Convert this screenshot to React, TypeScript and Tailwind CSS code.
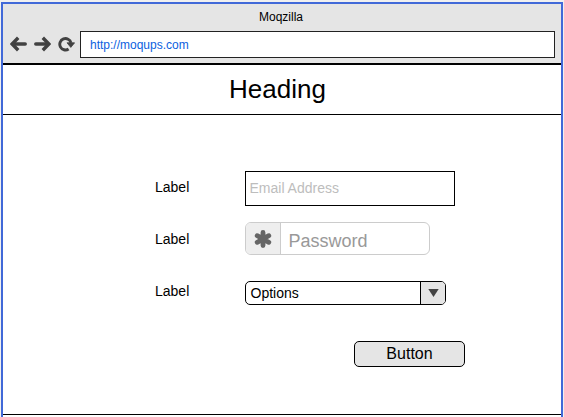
import type { ReactNode } from 'react';

const ARIAL = "font-['Liberation_Sans',Arial,sans-serif]";

function ArrowLeft({ className = '' }: { className?: string }) {
  return (
    <svg width="17" height="16" viewBox="0 0 17 16" className={className} fill="none" stroke="#424242">
      <path d="M3 8H15.2" strokeWidth="3.5" strokeLinecap="round" />
      <path d="M8.2 1.8L2.2 8L8.2 14.2" strokeWidth="3.4" />
    </svg>
  );
}

function Reload() {
  return (
    <svg width="17" height="16" viewBox="0 0 17 16" fill="none">
      <path d="M10.6 13A5.7 5.7 0 1 1 13 6.8" stroke="#424242" strokeWidth="2.9" />
      <path d="M9 6.8H16.6L12.8 11.4Z" fill="#424242" stroke="#424242" strokeWidth="0.8" strokeLinejoin="round" />
    </svg>
  );
}

function Asterisk() {
  return (
    <svg width="18" height="18" viewBox="0 0 18 18" stroke="#666" strokeWidth="4.8" strokeLinecap="round">
      <path d="M9 2.4V15.6M3.2 5.7L14.8 12.3M14.8 5.7L3.2 12.3" />
    </svg>
  );
}

function Row({ className, labelClassName, children }: { className: string; labelClassName: string; children: ReactNode }) {
  return (
    <div className={`flex items-center ${className}`}>
      <span className={`w-[90px] text-[14px] leading-4 ${labelClassName}`}>Label</span>
      {children}
    </div>
  );
}

export default function App() {
  return (
    <div className={`h-[417px] w-[564px] overflow-hidden bg-[#f0f0f0] pt-[2px] pr-px pl-px text-black ${ARIAL}`}>
      <div className="h-[415px] border-x-2 border-t-2 border-[#4169d8] bg-white">
        <header className="h-[61px] border-b-2 border-black bg-[#e5e5e5]">
          <div className="flex h-[27px] items-center justify-center pr-[2px] pb-[2px] text-[12px]">Moqzilla</div>
          <div className="flex h-[27px] items-center pr-[6px] pl-[7px]">
            <div className="flex w-[70px] gap-[7px] pb-[2px]">
              <ArrowLeft />
              <ArrowLeft className="-scale-x-100" />
              <Reload />
            </div>
            <div className="flex h-[27px] flex-1 items-center border border-[#222] bg-white pl-[9px] text-[12px] text-[#0b61e0]">
              http://moqups.com
            </div>
          </div>
        </header>
        <div className="flex h-[50px] items-center justify-center border-b border-black pr-[9px] pb-[1px] text-[26px] leading-none">
          Heading
        </div>
        <main className="h-[300px] border-b border-black pt-[56px] pl-[152px]">
          <Row className="h-[35px]" labelClassName="pb-[3px]">
            <div className="flex h-[35px] w-[210px] items-center border border-black pl-[3.5px] text-[14px] text-[#bdbdbd]">
              Email Address
            </div>
          </Row>
          <Row className="mt-4 h-[33px]" labelClassName="pt-px">
            <div className="flex h-[33px] w-[185px] overflow-hidden rounded-[6px] border border-[#ccc]">
              <div className="flex w-[35px] items-center justify-center border-r border-[#ccc] bg-[#eee]">
                <Asterisk />
              </div>
              <div className="flex items-center pt-[5px] pl-[7.5px] text-[18px] leading-none text-[#999]">Password</div>
            </div>
          </Row>
          <Row className="mt-[26px] h-[24px]" labelClassName="pb-[4px]">
            <div className="flex h-[24px] w-[201px] overflow-hidden rounded-[5px] border border-black">
              <div className="flex flex-1 items-center pl-[4.5px] text-[14px]">Options</div>
              <div className="flex w-[25px] items-center justify-center border-l border-black bg-[#e5e5e5]">
                <svg width="11" height="8" viewBox="0 0 11 8" fill="#444">
                  <path d="M0.3 0H10.7L5.5 8Z" />
                </svg>
              </div>
            </div>
          </Row>
          <button className="mt-[36px] ml-[199px] flex h-[26px] w-[111px] items-center justify-center rounded-[5px] border border-black bg-[#e5e5e5] text-[16px]">
            Button
          </button>
        </main>
      </div>
    </div>
  );
}
